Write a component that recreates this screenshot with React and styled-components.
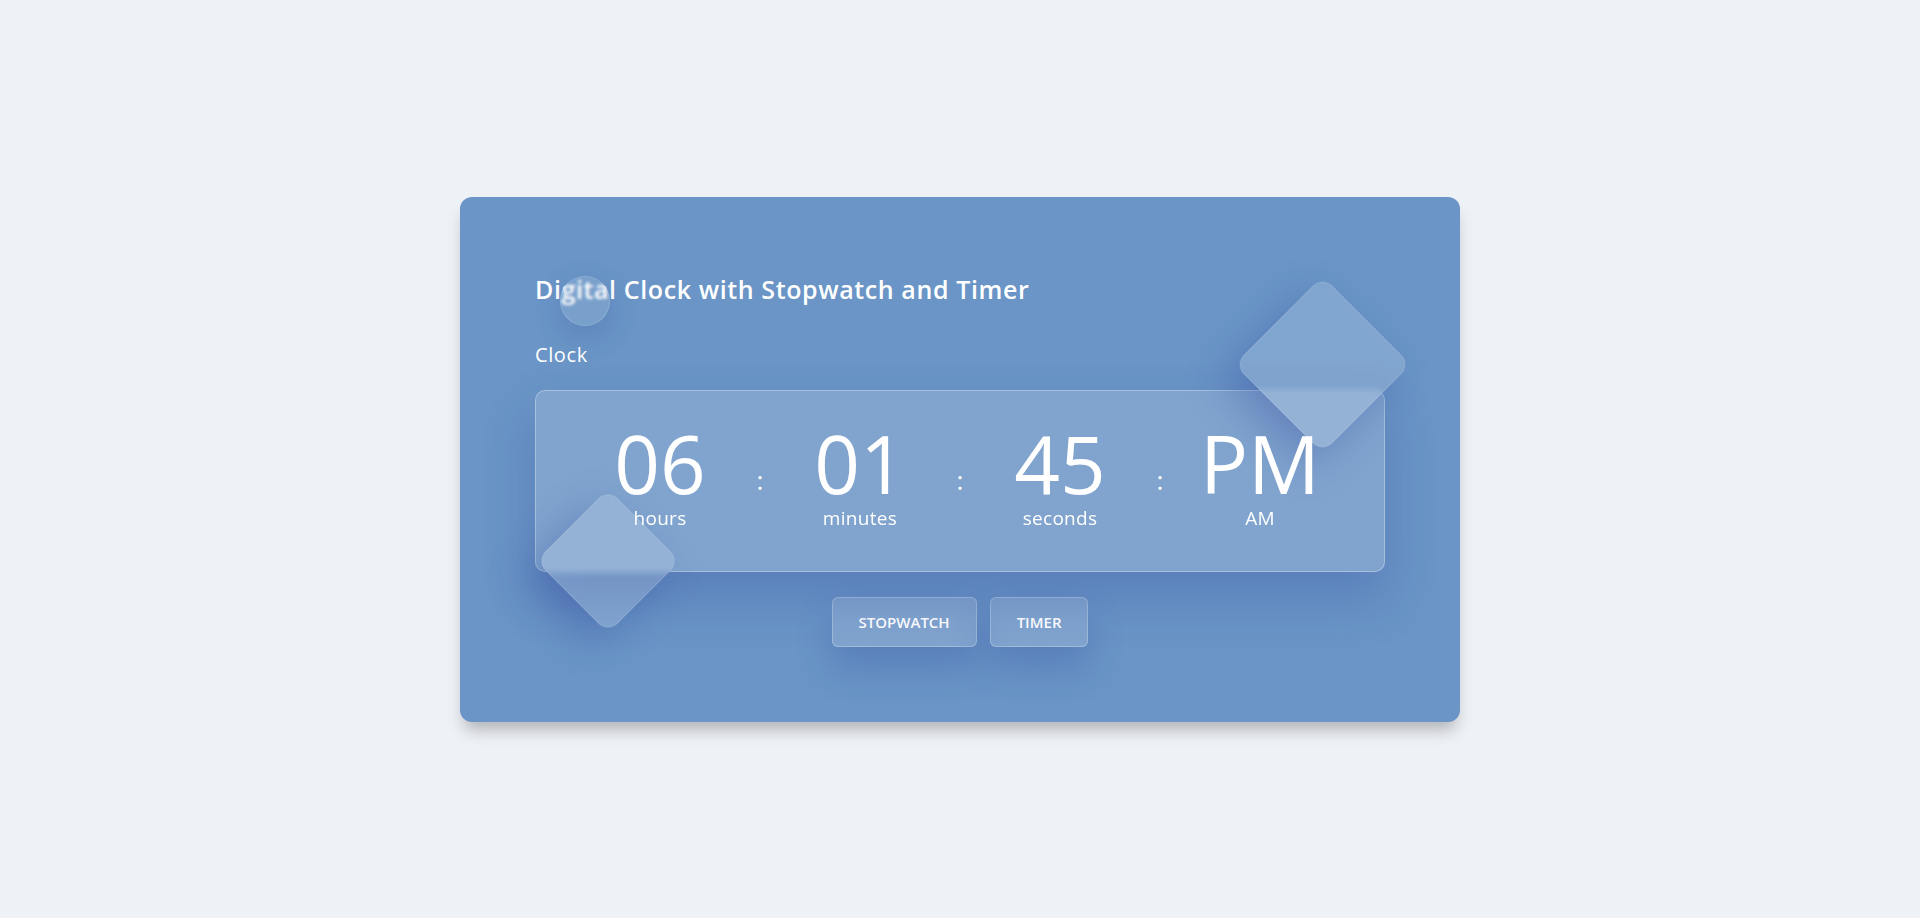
import React from "react";
import styled, { createGlobalStyle } from "styled-components";

const GlobalStyle = createGlobalStyle`
    * {
        box-sizing: border-box;
    }
    body {
        margin: 0;
        background: #eef1f6;
        font-family: "Open Sans", "Noto Sans", sans-serif;
        color: #fff;
    }
`;

const units = [
    { value: "06", label: "hours" },
    { value: "01", label: "minutes" },
    { value: "45", label: "seconds" },
    { value: "PM", label: "AM" },
];

export default function App() {
    return (
        <>
            <GlobalStyle />
            <Page>
                <Card>
                    <Title>Digital Clock with Stopwatch and Timer</Title>
                    <SectionLabel>Clock</SectionLabel>
                    <ClockPanel>
                        {units.map((u, i) => (
                            <React.Fragment key={u.label}>
                                {i > 0 && <Colon>:</Colon>}
                                <Unit>
                                    <Digits>{u.value}</Digits>
                                    <UnitLabel>{u.label}</UnitLabel>
                                </Unit>
                            </React.Fragment>
                        ))}
                    </ClockPanel>
                    <Buttons>
                        <GlassButton>Stopwatch</GlassButton>
                        <GlassButton>Timer</GlassButton>
                    </Buttons>

                    <Bubble />
                    <Diamond size={125} left={800} top={105} />
                    <Diamond size={102} left={97} top={313} />
                </Card>
            </Page>
        </>
    );
}

const Page = styled.div`
    min-height: 918px;
    display: flex;
    justify-content: center;
    padding-top: 197px;
`;

const Card = styled.div`
    position: relative;
    width: 1000px;
    height: 525px;
    padding: 75px;
    background: #6a95c6;
    border-radius: 12px;
    box-shadow: 0 12px 16px -4px rgba(0, 0, 0, 0.25);
    display: flex;
    flex-direction: column;
`;

const Title = styled.h2`
    margin: 0;
    font-size: 25px;
    font-weight: 600;
    letter-spacing: 0.6px;
    line-height: 34px;
`;

const SectionLabel = styled.div`
    margin-top: 34px;
    font-size: 20px;
    letter-spacing: 0.6px;
    line-height: 30px;
`;

const ClockPanel = styled.div`
    position: relative;
    margin-top: 20px;
    padding: 30px 0 41px;
    display: flex;
    justify-content: center;
    align-items: center;
    background: rgba(255, 255, 255, 0.15);
    border: 1px solid rgba(255, 255, 255, 0.3);
    border-radius: 10px;
    box-shadow: 0 25px 50px rgba(40, 60, 150, 0.25);
`;

const Unit = styled.div`
    position: relative;
    z-index: 2;
    width: 160px;
    display: flex;
    flex-direction: column;
    align-items: center;
`;

const Digits = styled.div`
    font-size: 80px;
    font-weight: 400;
    line-height: 84px;
`;

const UnitLabel = styled.div`
    margin-top: 1px;
    font-size: 19px;
    letter-spacing: 0.3px;
    line-height: 24px;
`;

const Colon = styled.div`
    width: 40px;
    text-align: center;
    font-size: 26px;
    line-height: 26px;
    margin-top: 8px;
`;

const Buttons = styled.div`
    margin-top: 25px;
    display: flex;
    justify-content: center;
    gap: 13px;
`;

const GlassButton = styled.button`
    height: 50px;
    padding: 0 26px;
    font-family: inherit;
    font-size: 15px;
    font-weight: 600;
    text-transform: uppercase;
    color: #fff;
    background: rgba(255, 255, 255, 0.15);
    border: 1px solid rgba(255, 255, 255, 0.25);
    border-radius: 6px;
    box-shadow: 0 20px 35px rgba(40, 60, 150, 0.25);
    cursor: pointer;
`;

const Bubble = styled.div`
    position: absolute;
    left: 100px;
    top: 79px;
    width: 50px;
    height: 50px;
    border-radius: 50%;
    background: rgba(255, 255, 255, 0.1);
    border: 1px solid rgba(255, 255, 255, 0.15);
    backdrop-filter: blur(1.5px);
    box-shadow: 0 10px 30px rgba(40, 60, 150, 0.2);
`;

const Diamond = styled.div`
    position: absolute;
    left: ${(p) => p.left}px;
    top: ${(p) => p.top}px;
    width: ${(p) => p.size}px;
    height: ${(p) => p.size}px;
    transform: rotate(45deg);
    border-radius: 14px;
    background: rgba(255, 255, 255, 0.15);
    border: 1px solid rgba(255, 255, 255, 0.12);
    backdrop-filter: blur(3px);
    box-shadow: 0 20px 40px rgba(40, 60, 150, 0.3);
`;
